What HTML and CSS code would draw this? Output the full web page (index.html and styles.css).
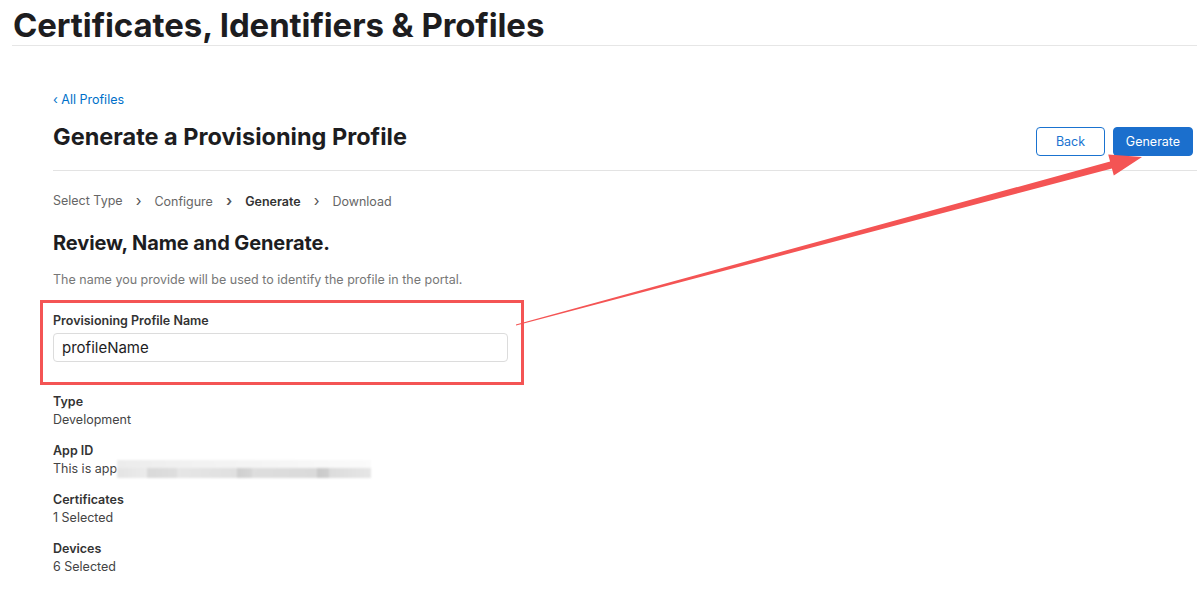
FILE: index.html
```html
<!doctype html>
<html>
    <head>
        <meta charset="utf-8" />
        <title>Certificates, Identifiers &amp; Profiles</title>
        <link rel="stylesheet" href="styles.css">
    </head>
    <body>
        <header class="site-header">
            <h1>Certificates, Identifiers &amp; Profiles</h1>
        </header>

        <main class="content">
            <a class="back-link" href="#">&lsaquo; All Profiles</a>

            <div class="page-head">
                <h2>Generate a Provisioning Profile</h2>
                <div class="actions">
                    <button class="btn btn-secondary">Back</button>
                    <button class="btn btn-primary">Generate</button>
                </div>
            </div>

            <ol class="steps">
                <li>Select Type</li>
                <li>Configure</li>
                <li class="current">Generate</li>
                <li>Download</li>
            </ol>

            <h3>Review, Name and Generate.</h3>
            <p class="hint">The name you provide will be used to identify the profile in the portal.</p>

            <div class="field marked">
                <label for="profile-name">Provisioning Profile Name</label>
                <input id="profile-name" type="text" value="profileName" />
            </div>

            <dl class="summary">
                <div class="row">
                    <dt>Type</dt>
                    <dd>Development</dd>
                </div>
                <div class="row">
                    <dt>App ID</dt>
                    <dd>This is app<span class="redacted"></span></dd>
                </div>
                <div class="row">
                    <dt>Certificates</dt>
                    <dd>1 Selected</dd>
                </div>
                <div class="row">
                    <dt>Devices</dt>
                    <dd>6 Selected</dd>
                </div>
            </dl>
        </main>

        <!-- pointer from the name field to the Generate button -->
        <svg class="pointer" width="1197" height="594" viewBox="0 0 1197 594">
            <polygon fill="#f45454"
                points="516.1,325.5 1111.9,168.4 1113.8,175.6 1142,157 1108.2,154.4 1110.1,161.6 515.9,324.5" />
        </svg>
    </body>
</html>
```

FILE: styles.css
```css
body {
    margin: 0;
    font-family: Inter, "Noto Sans", sans-serif;
    color: #1d1d1f;
    background: #fff;
    position: relative;
}
.site-header {
    margin-left: 12px;
    border-bottom: 1px solid #e6e6e6;
}
.site-header h1 {
    margin: 0;
    padding: 5px 0 0 1px;
    height: 40px;
    font-size: 33px;
    font-weight: 700;
    letter-spacing: -0.1px;
    line-height: 40px;
}
.content {
    padding: 45px 4px 0 53px;
}
.back-link {
    display: block;
    font-size: 12.5px;
    line-height: 18px;
    color: #0070c9;
    text-decoration: none;
}
.page-head {
    display: flex;
    justify-content: space-between;
    align-items: flex-start;
    margin-top: 18px;
    margin-right: -4px;
    padding-bottom: 14px;
    border-bottom: 1px solid #e3e3e3;
}
.page-head h2 {
    margin: 0;
    font-size: 23.5px;
    font-weight: 700;
    line-height: 20px;
}
.actions {
    display: flex;
    gap: 8px;
    margin-right: 4px;
}
.btn {
    height: 29px;
    padding: 0 11px;
    font-family: inherit;
    font-size: 12.5px;
    border-radius: 4px;
    cursor: pointer;
}
.btn-secondary {
    width: 69px;
    background: #fff;
    color: #1a73d0;
    border: 1px solid #1a73d0;
}
.btn-primary {
    width: 80px;
    background: #1b6fcd;
    color: #fff;
    border: 1px solid #1b6fcd;
}
.steps {
    display: flex;
    list-style: none;
    margin: 21px 0 0;
    padding: 0;
    font-size: 12.5px;
    line-height: 18px;
    color: #666;
}
.steps li + li::before {
    content: "\203A";
    margin: 0 13px;
    color: #555;
    font-size: 15px;
    line-height: 18px;
}
.steps .current {
    font-weight: 600;
    color: #333;
}
h3 {
    margin: 19px 0 0;
    font-size: 20px;
    font-weight: 700;
    line-height: 26px;
    letter-spacing: -0.1px;
}
.hint {
    margin: 15px 0 0;
    font-size: 12.5px;
    line-height: 18px;
    color: #777;
}
.field {
    display: flex;
    flex-direction: column;
    width: 455px;
}
.field label {
    font-size: 12.5px;
    font-weight: 600;
    line-height: 18px;
    color: #333;
}
.field input {
    margin-top: 3px;
    height: 29px;
    box-sizing: border-box;
    padding: 0 8px;
    font-family: inherit;
    font-size: 15px;
    color: #1d1d1f;
    border: 1px solid #dcdcdc;
    border-radius: 4px;
}
/* red annotation frame round the field */
.marked {
    margin: 11px 0 0 -13px;
    padding: 9px 13px 20px 10px;
    border: 3px solid #f45454;
}
.summary {
    margin: 8px 0 0;
    font-size: 12.5px;
    line-height: 18px;
}
.row {
    margin-bottom: 13px;
}
.row dt {
    font-weight: 600;
    color: #333;
}
.row dd {
    margin: 0;
    color: #444;
}
.redacted {
    display: inline-block;
    vertical-align: top;
    width: 254px;
    height: 18px;
    background:
        linear-gradient(to right, #e4e4e4 0, #ebebeb 30px, #d9d9d9 30px, #dedede 60px, #e6e6e6 60px, #e0e0e0 120px, #cfcfcf 120px, #d6d6d6 135px, #dedede 135px, #dadada 200px, #c9c9c9 200px, #cfcfcf 212px, #dcdcdc 212px, #e6e6e6 254px) bottom / 100% 10px no-repeat,
        linear-gradient(to right, #ececec 0, #f2f2f2 80px, #f5f5f5 150px, #fbfbfb 254px) top / 100% 8px no-repeat;
    filter: blur(0.8px);
}
.pointer {
    position: absolute;
    top: 0;
    left: 0;
    pointer-events: none;
}
```
